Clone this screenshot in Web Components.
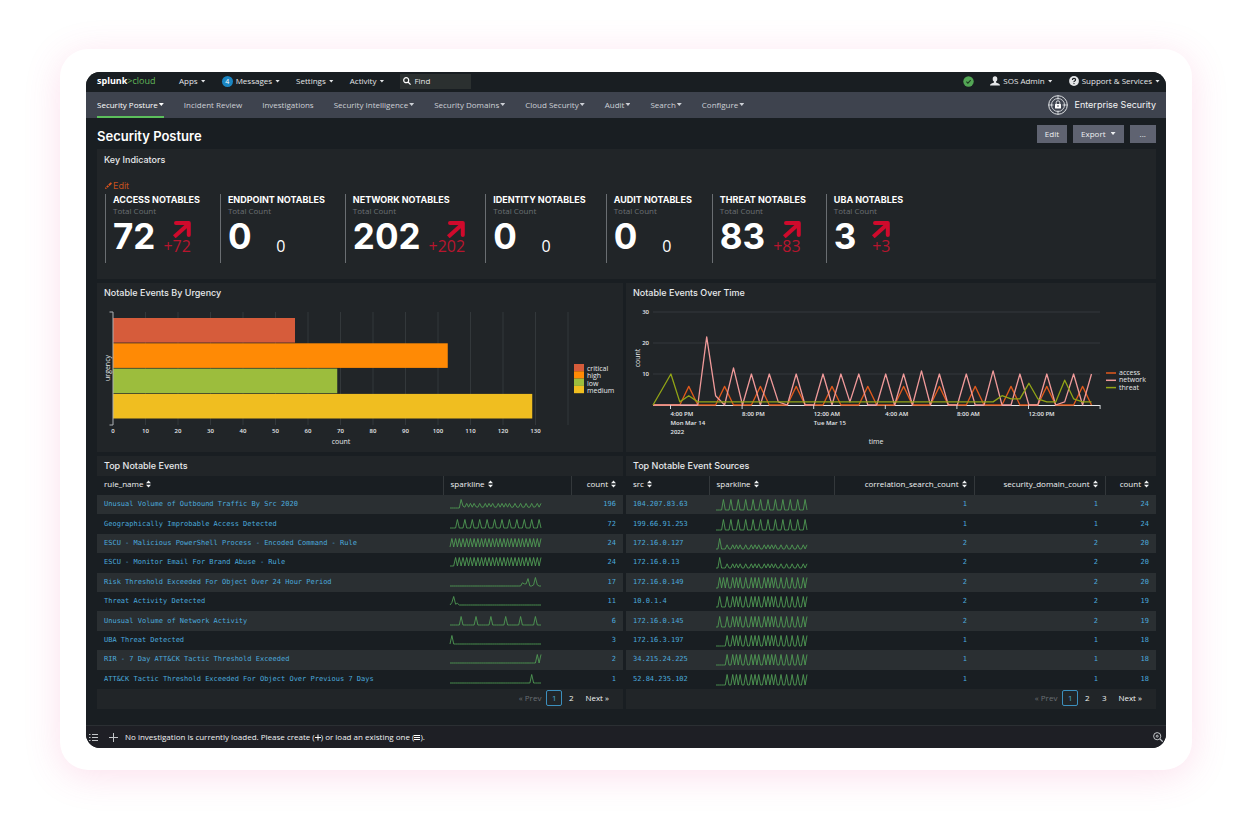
<!DOCTYPE html>
<html lang="en">
<head>
<meta charset="utf-8">
<title>Security Posture</title>
<style>
  body { margin: 0; background: #fff; font-family: "Open Sans", "Noto Sans", sans-serif; }
</style>
</head>
<body>
<security-app></security-app>

<script>
const define = (name, html, setup) => {
  const template = document.createElement('template');
  template.innerHTML = html;
  customElements.define(name, class extends HTMLElement {
    connectedCallback() {
      if (this.shadowRoot) return;
      const root = this.attachShadow({ mode: 'open' });
      root.append(template.content.cloneNode(true));
      if (setup) setup(this, root);
    }
  });
};

/* Small triangle after a menu label */
define('menu-caret', `
<style>
  :host { display: inline-block; width: 5px; height: 3px; margin-left: 3px; background: currentColor; clip-path: polygon(0 0, 100% 0, 50% 100%); }
</style>`);

/* Button that opens a menu */
define('menu-button', `
<style>
  :host { display: block; }
  button { all: unset; display: flex; align-items: center; font-size: 8px; line-height: 12px; color: inherit; white-space: nowrap; cursor: pointer; }
  ::slotted([slot=icon]) { margin-right: 3px; }
</style>
<button type="button"><slot name="icon"></slot><slot></slot><menu-caret></menu-caret></button>`);

define('top-bar', `
<style>
  :host { display: flex; align-items: center; height: 18px; padding: 0 6px 2px 11px; background: #191e22; color: #e4e6e8; gap: 16px; }
  .logo { width: 66px; font: 9px/14px "Open Sans", sans-serif; color: #62b75a; text-decoration: none; white-space: nowrap; }
  .logo b { color: #fff; }
  .badge { width: 11px; height: 11px; border-radius: 50%; background: #1a85c2; color: #fff; font: 7px/11px "Open Sans", sans-serif; text-align: center; }
  .find { display: flex; align-items: center; width: 68px; height: 15px; padding-left: 3px; background: #2b3030; }
  .find input { all: unset; width: 50px; margin-left: 3px; font: 8px/12px "Open Sans", sans-serif; color: #fff; }
  .find input::placeholder { color: #e4e6e8; opacity: 1; }
  .space { flex: 1; }
  svg { display: block; flex: none; }
</style>
<a class="logo" href="#home"><b>splunk</b>&gt;cloud</a>
<menu-button>Apps</menu-button>
<menu-button><span slot="icon" class="badge">4</span>Messages</menu-button>
<menu-button>Settings</menu-button>
<menu-button>Activity</menu-button>
<label class="find" aria-label="Find">
  <svg width="8" height="8" viewBox="0 0 8 8" fill="none" stroke="#fff" stroke-width="1.2"><circle cx="3.2" cy="3.2" r="2.5"/><path d="M5 5l2.6 2.6"/></svg>
  <input type="text" placeholder="Find">
</label>
<span class="space"></span>
<svg width="11" height="11" viewBox="0 0 11 11"><circle cx="5.5" cy="5.5" r="5.2" fill="#53a655"/><path d="M3.4 5.6l1.5 1.5 2.8-2.9" fill="none" stroke="#1d3a20" stroke-width="1.1"/></svg>
<menu-button><svg slot="icon" width="10" height="10" viewBox="0 0 10 10" fill="#e4e6e8"><ellipse cx="5" cy="3" rx="2.3" ry="2.8"/><path d="M4 5h2v1.6l3 1.1q1 .5 1 1.8H0q0-1.3 1-1.8l3-1.1z"/></svg>SOS Admin</menu-button>
<menu-button><svg slot="icon" width="10" height="10" viewBox="0 0 10 10"><circle cx="5" cy="5" r="4.9" fill="#e4e6e8"/><path d="M3.4 3.9q0-1.6 1.6-1.6t1.6 1.4q0 .9-.9 1.3t-.7 1.2" fill="none" stroke="#191e22" stroke-width="1.2"/><circle cx="5" cy="7.6" r=".7" fill="#191e22"/></svg>Support &amp; Services</menu-button>`);

define('app-nav', `
<style>
  :host { display: flex; align-items: stretch; height: 26px; padding: 0 10px 0 11px; background: #3e434e; color: #cdd0d6; }
  nav { display: flex; gap: 20px; flex: 1; }
  a { display: flex; align-items: center; font-size: 8px; line-height: 12px; color: inherit; text-decoration: none; white-space: nowrap; border-bottom: 2px solid transparent; padding-top: 1px; }
  a.on { color: #fff; border-color: #5cc05c; }
  menu-caret { margin-left: 1px; }
  .brand { display: flex; align-items: center; gap: 7px; font: 9px/12px Inter, sans-serif; color: #f4f5f6; white-space: nowrap; }
</style>
<nav aria-label="Sections"></nav>
<div class="brand">
  <svg width="20" height="20" viewBox="0 0 20 20" fill="none" stroke="#dfe1e4">
    <circle cx="10" cy="10" r="9.3" stroke-width="1"/><circle cx="10" cy="10" r="6.5" stroke-width=".9"/>
    <path d="M10 .5v4M10 15.5v4M.5 10h5M14.5 10h5" stroke-width=".9"/>
    <path d="M8.2 9.2V7.6a1.8 1.8 0 0 1 3.6 0v1.6" stroke-width="1"/>
    <rect x="7" y="9" width="6" height="4.6" rx=".5" fill="#fff" stroke="none"/><circle cx="10" cy="11" r=".8" fill="#3e434e" stroke="none"/>
  </svg>
  Enterprise Security
</div>`, (host, root) => {
  const items = ['Security Posture*', 'Incident Review', 'Investigations', 'Security Intelligence*', 'Security Domains*', 'Cloud Security*', 'Audit*', 'Search*', 'Configure*'];
  root.querySelector('nav').innerHTML = items.map((t, i) =>
    `<a href="#s${i}"${i ? '' : ' class="on" aria-current="page"'}>${t.replace('*', '')}${t.endsWith('*') ? '<menu-caret></menu-caret>' : ''}</a>`).join('');
});

define('page-title', `
<style>
  :host { display: flex; align-items: center; gap: 6px; height: 31px; }
  h1 { flex: 1; margin: 0; padding-top: 4px; font: 600 13px/18px Inter, sans-serif; color: #fff; }
  button { display: flex; align-items: center; justify-content: center; height: 18px; margin: 0; padding: 0 8px; border: 0; background: #5f6371; color: #eef0f2; font: 8px/12px "Open Sans", sans-serif; }
  menu-caret { margin-left: 5px; }
</style>
<h1>Security Posture</h1>
<button type="button">Edit</button>
<button type="button">Export<menu-caret></menu-caret></button>
<button type="button" aria-label="More">&nbsp;...&nbsp;</button>`);

define('dash-panel', `
<style>
  :host { display: block; background: #212528; min-width: 0; }
  h2 { margin: 0; padding: 0 7px; font: 500 9px/20px Inter, sans-serif; color: #e8eaec; }
</style>
<h2></h2><slot></slot>`, (host, root) => { root.querySelector('h2').textContent = host.getAttribute('heading'); });

define('key-indicator', `
<style>
  :host { display: block; height: 69px; padding: 0 20px 0 7px; border-left: 1px solid #6a6e72; white-space: nowrap; }
  h3 { margin: 0; font: 700 9px/12px Inter, sans-serif; color: #fff; }
  .sub { font-size: 8px; line-height: 10px; color: #6b7074; }
  .row { display: flex; gap: 8px; }
  .value { font: 700 35px/40px Inter, sans-serif; color: #fff; }
  .delta { display: flex; flex-direction: column; align-items: flex-end; min-width: 26px; padding-top: 5px; font-size: 16px; line-height: 16px; color: #fff; }
  .delta svg { display: block; visibility: hidden; }
  :host([rising]) .delta { color: #b8152e; }
  :host([rising]) .delta svg { visibility: visible; }
</style>
<h3></h3>
<div class="sub">Total Count</div>
<div class="row">
  <span class="value"></span>
  <div class="delta">
    <svg width="18" height="17" viewBox="0 0 18 17" fill="none" stroke="#cf0a2c" stroke-width="4"><path d="M1.3 15.8L15 3.4"/><path d="M3 2.1h12.8v12" stroke-linejoin="round" stroke-linecap="round"/></svg>
    <span></span>
  </div>
</div>`, (host, root) => {
  root.querySelector('h3').textContent = host.getAttribute('label');
  root.querySelector('.value').textContent = host.getAttribute('value');
  root.querySelector('.delta span').textContent = host.getAttribute('delta');
});

define('key-indicators', `
<style>
  :host { display: block; padding: 10px 8px 16px; }
  a { display: flex; align-items: center; gap: 1px; width: max-content; margin-bottom: 3px; font: 9px/11px Inter, sans-serif; color: #c4511f; text-decoration: none; }
  .strip { display: flex; }
</style>
<a href="#edit"><svg width="7" height="7" viewBox="0 0 7 7"><path d="M0 7l.6-2L2 6.4zM1.2 4.4L2.6 5.8 4 4.6 2.6 3.2zM3.2 2.6l1.4 1.4L7 1.4 5.8.2z" fill="#d9541e"/></svg>Edit</a>
<div class="strip">
  <key-indicator label="ACCESS NOTABLES" value="72" delta="+72" rising></key-indicator>
  <key-indicator label="ENDPOINT NOTABLES" value="0" delta="0"></key-indicator>
  <key-indicator label="NETWORK NOTABLES" value="202" delta="+202" rising></key-indicator>
  <key-indicator label="IDENTITY NOTABLES" value="0" delta="0"></key-indicator>
  <key-indicator label="AUDIT NOTABLES" value="0" delta="0"></key-indicator>
  <key-indicator label="THREAT NOTABLES" value="83" delta="+83" rising></key-indicator>
  <key-indicator label="UBA NOTABLES" value="3" delta="+3" rising></key-indicator>
</div>`);

const chartCss = `
<style>
  :host { display: block; }
  svg { display: block; width: 100%; height: auto; font-family: "Open Sans", sans-serif; font-size: 7px; fill: #e6e8ea; }
  .date { font-size: 6px; font-weight: 600; }
</style>`;

define('urgency-chart', chartCss, (host, root) => {
  const x0 = 16, step = 32.5, top = 9, bottom = 122;
  const bars = [['critical', 56, '#d65c3b'], ['high', 103, '#ff8a05'], ['low', 69, '#9cbd3d'], ['medium', 129, '#f0be20']];
  let s = '';
  for (let i = 1; i <= 14; i++) s += `<path d="M${x0 + i * step} ${top}V${bottom}" stroke="#33383b"/>`;
  for (let i = 0; i <= 13; i++) s += `<text x="${x0 + i * step}" y="130" text-anchor="middle" class="date">${i * 10}</text>`;
  bars.forEach(([name, n, c], i) => {
    s += `<rect x="${x0}" y="${15 + i * 25.3}" width="${n * step / 10}" height="24.6" fill="${c}"/>`;
    s += `<rect x="477" y="${61 + i * 7.3}" width="10" height="7.3" fill="${c}"/><text x="490" y="${68 + i * 7.3}">${name}</text>`;
  });
  s += `<path d="M12.5 ${top}h3.5V${bottom}h-3.5" fill="none" stroke="#aeb2b5"/>
    <text x="244" y="141" text-anchor="middle">count</text>
    <text transform="translate(13 65) rotate(-90)" text-anchor="middle">urgency</text>`;
  root.innerHTML += `<svg viewBox="0 0 526 149" role="img" aria-label="Notable events by urgency">${s}</svg>`;
});

const peaks = map => { const a = Array(50).fill(0); for (const k in map) a[k] = map[k]; return a; };
const at = (list, v) => peaks(Object.fromEntries(list.map(i => [i, v])));
const NET = [6, 9, 11, 13, 16, 19, 21, 23, 26, 28, 30, 32, 35, 38, 41, 44, 47, 49];
const FOUR = [4, 8, 12, 16, 20, 24, 28, 32, 36, 40, 44, 48];
const network = at(NET, 10);
Object.assign(network, { 6: 22, 7: 3, 9: 12, 14: 1, 22: 1, 30: 11, 38: 11, 46: 1 });
const threat = Array(50).fill(1);
Object.assign(threat, { 0: 0, 1: 5, 2: 10, 4: 3, 39: 3, 40: 2, 41: 2, 42: 7, 43: 2, 46: 8, 47: 2 });

define('time-chart', chartCss, (host, root) => {
  const x0 = 27, base = 102, unit = 3.1, dx = 8.95;
  const line = (d, c) => `<polyline points="${d.map((v, i) => `${(x0 + i * dx).toFixed(1)},${(base - v * unit).toFixed(1)}`).join(' ')}" fill="none" stroke="${c}" stroke-width="1.3" stroke-linejoin="round"/>`;
  let s = '';
  [10, 20, 30].forEach(v => {
    s += `<path d="M${x0} ${base - v * unit}H474" stroke="#34393c"/><text x="23" y="${base - v * unit + 2}" text-anchor="end" class="date">${v}</text>`;
  });
  s += `<path d="M${x0} ${base + .5}H474" stroke="#e8e8e8"/>`;
  s += line(at(FOUR, 6), '#e0591c') + line(network, '#f09a9a') + line(threat, '#92a516');
  const labels = [['4:00 PM', 'Mon Mar 14', '2022'], ['8:00 PM'], ['12:00 AM', 'Tue Mar 15'], ['4:00 AM'], ['8:00 AM'], ['12:00 PM'], []];
  labels.forEach((l, i) => {
    const x = 44.5 + i * 71.6;
    s += `<path d="M${x} ${base}v4" stroke="#d0d3d5"/>`;
    l.forEach((t, j) => s += `<text x="${x}" y="${113 + j * 9}" class="date">${t}</text>`);
  });
  [['access', '#e0591c'], ['network', '#f09a9a'], ['threat', '#92a516']].forEach(([n, c], i) => {
    s += `<path d="M480 ${70 + i * 7.3}h10" stroke="${c}" stroke-width="1.5"/><text x="493" y="${72 + i * 7.3}">${n}</text>`;
  });
  s += `<text x="250" y="141" text-anchor="middle">time</text><text transform="translate(14 55) rotate(-90)" text-anchor="middle">count</text>`;
  root.innerHTML += `<svg viewBox="0 0 530 149" role="img" aria-label="Notable events over time">${s}</svg>`;
});

define('spark-line', `<style>:host { display: block; } svg { display: block; overflow: visible; }</style>`, (host, root) => {
  const d = host.points, h = host.tall ? 11 : 9, max = Math.max(...d);
  root.innerHTML += `<svg width="91" height="11" viewBox="0 0 91 11" aria-hidden="true"><polyline fill="none" stroke="#4f9a53" stroke-width=".9" points="${d.map((v, i) => `${(i * 1.857).toFixed(1)},${(h - v / max * (h - .5)).toFixed(1)}`).join(' ')}"/></svg>`;
});

define('data-table', `
<style>
  :host { display: block; }
  table { width: 100%; height: 213px; border-collapse: collapse; table-layout: fixed; background: #191e22; }
  thead tr { height: 19px; }
  th { padding: 0 7px 3px; font-size: 8px; line-height: 12px; font-weight: 400; color: #f0f2f3; text-align: left; white-space: nowrap; }
  th + th { border-left: 1px solid #33383b; }
  td { padding: 0 7px; font: 7px/11px "DejaVu Sans Mono", "Liberation Mono", monospace; color: #4aa9dc; white-space: nowrap; }
  tbody tr:nth-child(odd) { background: #2a2f32; }
  .n { text-align: right; }
  td a { color: inherit; text-decoration: none; }
  th button { all: unset; cursor: pointer; }
  th svg { margin-left: 3px; vertical-align: -1px; }
</style>
<table><colgroup></colgroup><thead><tr></tr></thead><tbody></tbody></table>`, (host, root) => {
  const { cols, rows, tall } = host.data;
  const total = cols.reduce((a, c) => a + c[1], 0);
  const icon = '<svg width="5" height="8" viewBox="0 0 5 8" fill="currentColor"><path d="M0 3.3L2.5.4 5 3.3zM0 4.7h5L2.5 7.6z"/></svg>';
  root.querySelector('colgroup').innerHTML = cols.map(c => `<col style="width:${c[1] / total * 100}%">`).join('');
  root.querySelector('thead tr').innerHTML = cols.map(c => `<th scope="col"${c[2] ? ' class="n"' : ''}><button type="button">${c[0]}${icon}</button></th>`).join('');
  const body = root.querySelector('tbody');
  rows.forEach(r => {
    const tr = body.insertRow();
    r.forEach((v, i) => {
      const td = tr.insertCell();
      if (Array.isArray(v)) {
        const sp = document.createElement('spark-line');
        sp.points = v; sp.tall = tall; td.append(sp);
      } else {
        if (cols[i][2]) td.className = 'n';
        const a = document.createElement('a');
        a.href = '#drilldown'; a.textContent = v; td.append(a);
      }
    });
  });
});

define('page-links', `
<style>
  :host { display: block; }
  nav { display: flex; justify-content: flex-end; align-items: center; gap: 1px; height: 18px; padding: 0 14px 2px 0; font-size: 8px; line-height: 14px; }
  a { box-sizing: border-box; color: #f0f2f3; text-decoration: none; text-align: center; white-space: nowrap; }
  .p { width: 16px; }
  .on { border: 1px solid #3c8fbd; border-radius: 2px; color: #4aa5d6; }
  .prev { color: #6b7074; margin-right: 4px; }
  .next { margin-left: 5px; }
</style>
<nav aria-label="Pages"></nav>`, (host, root) => {
  let s = '<a class="prev" href="#prev">« Prev</a>';
  for (let i = 1; i <= +host.getAttribute('count'); i++) s += `<a href="#p${i}" class="p${i === 1 ? ' on' : ''}">${i}</a>`;
  root.querySelector('nav').innerHTML = s + '<a class="next" href="#next">Next »</a>';
});

define('status-bar', `
<style>
  :host { display: flex; align-items: center; height: 22px; padding: 0 3px; border-top: 1px solid #2b2f33; background: #1e1f25; color: #f0f2f3; font-size: 8px; line-height: 12px; white-space: nowrap; }
  button { all: unset; display: block; cursor: pointer; }
  .create { margin: 0 7px 0 10px; }
  p { margin: 0; flex: 1; }
  svg { display: block; }
  p svg { display: inline; vertical-align: -1px; }
</style>
<button type="button" aria-label="List"><svg width="10" height="9" viewBox="0 0 10 9" stroke="#c3c6c9" fill="none"><path d="M0 1.5h1.5M0 4.5h1.5M0 7.5h1.5M3 1.5h6M3 4.5h6M3 7.5h6"/></svg></button>
<button class="create" type="button" aria-label="Create"><svg width="9" height="9" viewBox="0 0 9 9" stroke="#c3c6c9"><path d="M0 4.5h9M4.5 0v9"/></svg></button>
<p>No investigation is currently loaded. Please create (<svg width="6" height="7" viewBox="0 0 6 7" stroke="#fff"><path d="M0 3.5h6M3 .5v6"/></svg>) or load an existing one (<svg width="6" height="7" viewBox="0 0 6 7" stroke="#fff"><path d="M0 1.5h6M0 3.5h6M0 5.5h6"/></svg>).</p>
<button type="button" aria-label="Inspect"><svg width="10" height="10" viewBox="0 0 10 10" stroke="#c3c6c9" fill="none"><circle cx="4.2" cy="4.2" r="3.6"/><circle cx="4.2" cy="4.2" r="1"/><path d="M6.9 6.9L9.7 9.7" stroke-width="1.3"/></svg></button>`);

const net = (v, extra = []) => at([...extra, ...NET], v);
const rowsLeft = [
  ['Unusual Volume of Outbound Traffic By Src 2020', network.map((v, i) => v > 20 ? 22 : i > 6 ? Math.min(v, 10) + 2 : v), '196'],
  ['Geographically Improbable Access Detected', at(FOUR, 6), '72'],
  ['ESCU - Malicious PowerShell Process - Encoded Command - Rule', Array.from({ length: 50 }, (_, i) => i % 2), '24'],
  ['ESCU - Monitor Email For Brand Abuse - Rule', Array.from({ length: 50 }, (_, i) => i < 2 ? 0 : i % 2), '24'],
  ['Risk Threshold Exceeded For Object Over 24 Hour Period', peaks({ 39: 3, 40: 2, 41: 2, 42: 7, 45: 1, 46: 8, 47: 1 }), '17'],
  ['Threat Activity Detected', peaks({ 1: 3, 2: 10, 3: 1, 4: 2 }), '11'],
  ['Unusual Volume of Network Activity', at([6, 14, 22, 30, 38, 46], 1), '6'],
  ['UBA Threat Detected', at([1], 1), '3'],
  ['RIR - 7 Day ATT&CK Tactic Threshold Exceeded', at([47, 49], 1), '2'],
  ['ATT&CK Tactic Threshold Exceeded For Object Over Previous 7 Days', at([44], 1), '1'],
];
const small = net(4); small[2] = 10;
const rowsRight = [
  ['104.207.83.63', at(FOUR, 1), '1', '1', '24'],
  ['199.66.91.253', at(FOUR, 1), '1', '1', '24'],
  ['172.16.0.127', small, '2', '2', '20'],
  ['172.16.0.13', small, '2', '2', '20'],
  ['172.16.0.149', net(1, [2, 4]), '2', '2', '20'],
  ['10.0.1.4', net(1, [2]), '2', '2', '19'],
  ['172.16.0.145', net(1, [2]), '2', '2', '19'],
  ['172.16.3.197', net(1), '1', '1', '18'],
  ['34.215.24.225', net(1), '1', '1', '18'],
  ['52.84.235.102', net(1), '1', '1', '18'],
];

define('security-app', `
<style>
  :host { display: block; padding: 49px 60px 70px; }
  .card { padding: 23px 26px 22px; border-radius: 28px; background: #fff; box-shadow: 0 6px 36px rgba(240, 70, 150, .17); }
  .app { border-radius: 14px; overflow: hidden; background: #191e22; }
  main { display: grid; grid-template-columns: 526fr 530fr; column-gap: 3px; row-gap: 4px; padding: 0 10px 16px 11px; }
  .wide { grid-column: 1 / -1; }
  page-title { margin-bottom: -4px; }
  dash-panel.wide { padding-top: 1px; }
</style>
<div class="card"><div class="app">
  <top-bar></top-bar>
  <app-nav></app-nav>
  <main>
    <page-title class="wide"></page-title>
    <dash-panel class="wide" heading="Key Indicators"><key-indicators></key-indicators></dash-panel>
    <dash-panel heading="Notable Events By Urgency"><urgency-chart></urgency-chart></dash-panel>
    <dash-panel heading="Notable Events Over Time"><time-chart></time-chart></dash-panel>
    <dash-panel heading="Top Notable Events" id="events"></dash-panel>
    <dash-panel heading="Top Notable Event Sources" id="sources"></dash-panel>
  </main>
  <status-bar></status-bar>
</div></div>`, (host, root) => {
  const fill = (id, data, pages) => {
    const t = document.createElement('data-table');
    t.data = data;
    const p = document.createElement('page-links');
    p.setAttribute('count', pages);
    root.getElementById(id).append(t, p);
  };
  fill('events', { cols: [['rule_name', 346], ['sparkline', 128], ['count', 52, 1]], rows: rowsLeft }, 2);
  fill('sources', { cols: [['src', 83], ['sparkline', 125], ['correlation_search_count', 140, 1], ['security_domain_count', 131, 1], ['count', 51, 1]], rows: rowsRight, tall: true }, 3);
});
</script>
</body>
</html>
